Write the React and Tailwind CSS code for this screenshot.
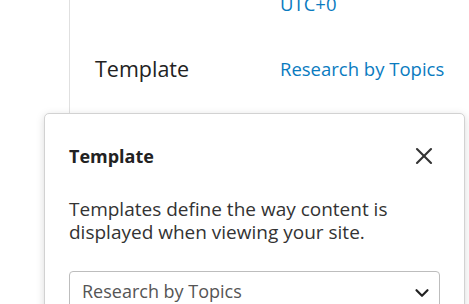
import React from "react";
import { X, ChevronDown } from "lucide-react";

export default function App() {
  return (
    <div className="relative w-[469px] h-[304px] overflow-hidden bg-white font-['Open_Sans',sans-serif]">
      <div className="ml-[69px] h-full border-l border-[#e0e0e0]">
        <div className="-mt-[10px] pl-[25px]">
          <div className="flex items-center h-[28px]">
            <span className="w-[185px]" />
            <span className="text-[18.5px] text-[#0a7bbf]">UTC+0</span>
          </div>
          <div className="flex items-center mt-[37px] h-[28px]">
            <span className="w-[185px] text-[21.5px] text-[#222]">Template</span>
            <span className="text-[18.5px] text-[#0a7bbf]">Research by Topics</span>
          </div>
        </div>
      </div>

      <div className="absolute left-[44px] top-[113px] w-[421px] h-[220px] rounded-[5px] border border-[#d2d2d2] bg-white shadow-[0_2px_8px_rgba(0,0,0,0.15)] px-[24px] pt-[28px]">
        <div className="flex items-center justify-between h-[28px]">
          <h2 className="text-[18px] leading-[27px] font-bold text-[#222]">Template</h2>
          <X className="w-[28px] h-[28px] mr-[2px] text-[#333]" strokeWidth={1.8} />
        </div>
        <p className="mt-[28px] text-[19px] leading-[23px] text-[#333] pr-[20px]">
          Templates define the way content is displayed when viewing your site.
        </p>
        <div className="mt-[27px] h-[44px] rounded-[4px] border border-[#bdbdbd] flex items-center justify-between pl-[12px] pr-[6px]">
          <span className="mb-[4px] text-[18px] leading-[27px] text-[#555]">Research by Topics</span>
          <ChevronDown className="w-[22px] h-[22px] text-[#222]" strokeWidth={2.4} />
        </div>
      </div>
    </div>
  );
}
